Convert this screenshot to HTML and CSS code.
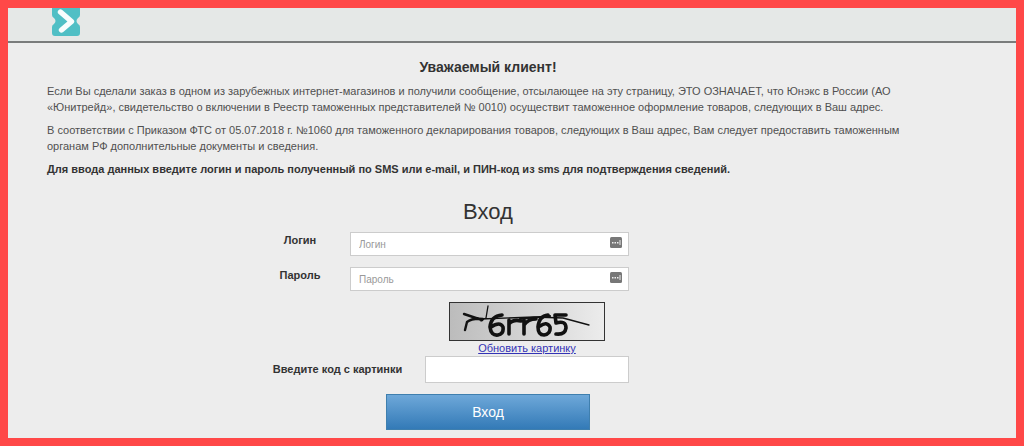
FILE: index.html
```html
<!DOCTYPE html>
<html lang="ru">
<head>
<meta charset="utf-8">
<meta name="viewport" content="width=device-width, initial-scale=1">
<title>Вход</title>
<link rel="stylesheet" href="styles.css">
</head>
<body class="page">
<header class="header">
  <svg class="logo" viewBox="0 0 30 28" role="img" aria-label="Логотип">
    <path fill="#50bfc5" d="M1 0H29V7Q29 9 27 10Q24 13 27 16Q29 17 29 19V25Q29 28 26 28H4Q1 28 1 25V19Q1 17 3 16Q6 13 3 10Q1 9 1 7Z"/>
    <path fill="none" stroke="#f8fdfd" stroke-width="5.400" stroke-linecap="round" stroke-linejoin="round" d="M9.500 4L20.500 13.500L10.500 22"/>
  </svg>
</header>
<main class="content">
  <h1 class="greeting">Уважаемый клиент!</h1>
  <p class="text">Если Вы сделали заказ в одном из зарубежных интернет-магазинов и получили сообщение, отсылающее на эту страницу, ЭТО ОЗНАЧАЕТ, что Юнэкс в России (АО «Юнитрейд», свидетельство о включении в Реестр таможенных представителей № 0010) осуществит таможенное оформление товаров, следующих в Ваш адрес.</p>
  <p class="text">В соответствии с Приказом ФТС от 05.07.2018 г. №1060 для таможенного декларирования товаров, следующих в Ваш адрес, Вам следует предоставить таможенным органам РФ дополнительные документы и сведения.</p>
  <p class="text text-strong">Для ввода данных введите логин и пароль полученный по SMS или e-mail, и ПИН-код из sms для подтверждения сведений.</p>
  <form class="login">
    <h2 class="login-title">Вход</h2>
    <div class="row">
      <label class="label" for="login">Логин</label>
      <div class="field">
        <input class="input" id="login" type="text" placeholder="Логин">
        <svg class="key" viewBox="0 0 12 11" aria-hidden="true"><rect width="12" height="11" rx="1.500" fill="#777"/><path d="M2 5h1.500v1.500H2zM4.500 5H6v1.500H4.500zM7 5h1.500v1.500H7zM9.500 3h1v5h-1z" fill="#eee"/></svg>
      </div>
    </div>
    <div class="row">
      <label class="label" for="password">Пароль</label>
      <div class="field">
        <input class="input" id="password" type="password" placeholder="Пароль">
        <svg class="key" viewBox="0 0 12 11" aria-hidden="true"><rect width="12" height="11" rx="1.500" fill="#777"/><path d="M2 5h1.500v1.500H2zM4.500 5H6v1.500H4.500zM7 5h1.500v1.500H7zM9.500 3h1v5h-1z" fill="#eee"/></svg>
      </div>
    </div>
    <div class="captcha">
      <svg class="captcha-image" viewBox="0 0 154 37" role="img" aria-label="Код с картинки">
        <g fill="none" stroke="#111" stroke-linecap="round" stroke-linejoin="round">
          <path stroke-width="2.400" d="M15 27L17 19Q22 15 33 16M14 11L32 17"/>
          <path stroke-width="1.300" d="M38 3L36 15L31 18M31 16L84 14L113 15L139 22"/>
          <path stroke-width="3.600" d="M52 12Q41 13 40 24Q41 33 48 32Q54 31 53 24Q50 18 41 24M59 31V17M59 21Q63 16 71 18M74 31V17M74 22Q78 16 86 16M98 12Q89 13 88 24Q88 32 94 32Q101 31 100 24Q97 18 90 23M116 12L105 12L106 20Q116 17 116 25Q115 32 106 31"/>
          <path stroke-width="2.200" d="M70 16L100 13"/>
        </g>
      </svg>
      <a class="refresh" href="#">Обновить картинку</a>
    </div>
    <div class="row row-code">
      <label class="label" for="code">Введите код с картинки</label>
      <input class="input input-code" id="code" type="text">
    </div>
    <button class="submit" type="submit">Вход</button>
  </form>
</main>
</body>
</html>
```
FILE: styles.css
```css
* {
  box-sizing: border-box;
}

.page {
  margin: 0;
  min-height: 100vh;
  border: 8px solid #ff4848;
  background: #ededed;
  color: #333;
  font-family: "Liberation Sans", Arial, sans-serif;
  font-size: 11px;
  line-height: 16px;
}

.header {
  padding: 0 43px 5px;
  border-bottom: 2px solid #7a7c7c;
  background: #e5e8e7;
}

.logo {
  display: block;
  width: 30px;
  height: 28px;
}

.content {
  padding: 16px 87px 0 39px;
}

.greeting {
  margin: 0 0 8px;
  font-size: 14px;
  line-height: 16px;
  text-align: center;
}

.text {
  margin: 0 0 7px;
  color: #505050;
}

.text-strong {
  color: #333;
  font-weight: bold;
}

.login {
  width: 476px;
  max-width: 100%;
  margin: 22px auto 0;
}

.login-title {
  margin: 0 0 7px;
  font-size: 22px;
  font-weight: normal;
  line-height: 26px;
  text-align: center;
}

.row {
  display: grid;
  grid-template-columns: 100px 1fr;
  margin: 0 97px 11px 0;
}

.row-code {
  grid-template-columns: 175px 1fr;
}

.label {
  font-weight: bold;
  text-align: center;
}

.row-code .label {
  padding-top: 5px;
}

.field {
  position: relative;
}

.input {
  display: block;
  width: 100%;
  height: 24px;
  padding: 0 8px;
  border: 1px solid #ccc;
  background: #fff;
  color: #333;
  font-family: inherit;
  font-size: 10px;
}

.input::placeholder {
  color: #999;
  opacity: 1;
}

.input-code {
  height: 27px;
}

.key {
  position: absolute;
  top: 5px;
  right: 7px;
  width: 12px;
  height: 11px;
}

.captcha {
  display: flex;
  flex-direction: column;
  align-items: center;
  margin: 0 97px 0 175px;
}

.captcha-image {
  width: 156px;
  height: 39px;
  border: 1px solid #333;
  background: linear-gradient(90deg, #bcbcbc, #ececec);
}

.refresh {
  color: #3333b5;
  font-size: 11px;
  line-height: 15px;
}

.submit {
  display: block;
  width: 204px;
  height: 36px;
  margin: 0 auto;
  padding: 0;
  border: 1px solid #3f7fae;
  background: linear-gradient(#6ea8d9, #337ab7);
  color: #fff;
  font-family: inherit;
  font-size: 14px;
}
```
